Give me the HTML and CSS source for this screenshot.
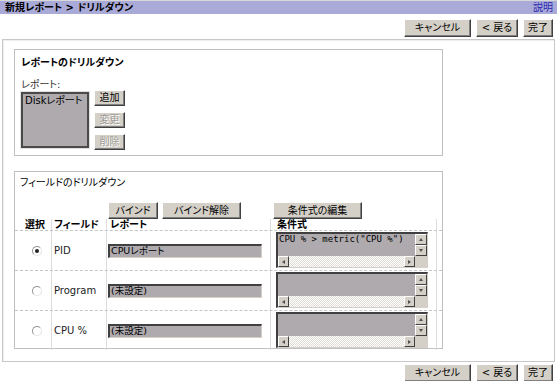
FILE: index.html
```html
<!DOCTYPE html>
<html lang="ja">
<head>
    <meta charset="UTF-8">
    <meta name="viewport" content="width=device-width, initial-scale=1.0">
    <title>新規レポート &gt; ドリルダウン</title>
    <link rel="stylesheet" href="styles.css">
</head>
<body>

<div class="titlebar">
    <span class="title">新規レポート &gt; ドリルダウン</span>
    <a class="help" href="#">説明</a>
</div>

<div class="actions">
    <button class="btn btn-cancel">キャンセル</button>
    <button class="btn btn-back">&lt; 戻る</button>
    <button class="btn btn-done">完了</button>
</div>

<div class="frame">
    <div class="section section-report">
        <div class="section-title">レポートのドリルダウン</div>
        <div class="field-label">レポート:</div>
        <div class="report-row">
            <div class="listbox">Diskレポート</div>
            <div class="side-buttons">
                <button class="btn btn-side">追加</button>
                <button class="btn btn-side" disabled>変更</button>
                <button class="btn btn-side" disabled>削除</button>
            </div>
        </div>
    </div>

    <div class="section section-fields">
        <div class="section-title thin">フィールドのドリルダウン</div>

        <div class="grid tool-row">
            <div></div>
            <div></div>
            <div class="tool-cell">
                <button class="btn btn-bind">バインド</button>
                <button class="btn btn-unbind">バインド解除</button>
            </div>
            <div class="tool-cell">
                <button class="btn btn-cond">条件式の編集</button>
            </div>
        </div>

        <div class="grid head-row">
            <div class="cell c-sel">選択</div>
            <div class="cell c-field">フィールド</div>
            <div class="cell c-report">レポート</div>
            <div class="cell c-cond">条件式</div>
        </div>

        <div class="grid data-row">
            <div class="cell c-sel"><span class="radio checked"></span></div>
            <div class="cell c-field">PID</div>
            <div class="cell c-report"><div class="textbox">CPUレポート</div></div>
            <div class="cell c-cond">
                <div class="memo">
                    <div class="memo-text">CPU % &gt; metric("CPU %")</div>
                    <div class="vscroll">
                        <span class="sbtn"><i class="arr up"></i></span>
                        <span class="sbtn"><i class="arr down"></i></span>
                    </div>
                    <div class="hscroll">
                        <span class="sbtn"><i class="arr left"></i></span>
                        <span class="track"></span>
                        <span class="sbtn"><i class="arr right"></i></span>
                    </div>
                    <div class="corner"></div>
                </div>
            </div>
        </div>

        <div class="grid data-row">
            <div class="cell c-sel"><span class="radio"></span></div>
            <div class="cell c-field">Program</div>
            <div class="cell c-report"><div class="textbox">(未設定)</div></div>
            <div class="cell c-cond">
                <div class="memo">
                    <div class="memo-text"></div>
                    <div class="vscroll">
                        <span class="sbtn"><i class="arr up"></i></span>
                        <span class="sbtn"><i class="arr down"></i></span>
                    </div>
                    <div class="hscroll">
                        <span class="sbtn"><i class="arr left"></i></span>
                        <span class="track"></span>
                        <span class="sbtn"><i class="arr right"></i></span>
                    </div>
                    <div class="corner"></div>
                </div>
            </div>
        </div>

        <div class="grid data-row last">
            <div class="cell c-sel"><span class="radio"></span></div>
            <div class="cell c-field">CPU %</div>
            <div class="cell c-report"><div class="textbox">(未設定)</div></div>
            <div class="cell c-cond">
                <div class="memo">
                    <div class="memo-text"></div>
                    <div class="vscroll">
                        <span class="sbtn"><i class="arr up"></i></span>
                        <span class="sbtn"><i class="arr down"></i></span>
                    </div>
                    <div class="hscroll">
                        <span class="sbtn"><i class="arr left"></i></span>
                        <span class="track"></span>
                        <span class="sbtn"><i class="arr right"></i></span>
                    </div>
                    <div class="corner"></div>
                </div>
            </div>
        </div>
    </div>
</div>

<div class="actions bottom">
    <button class="btn btn-cancel">キャンセル</button>
    <button class="btn btn-back">&lt; 戻る</button>
    <button class="btn btn-done">完了</button>
</div>

</body>
</html>
```

FILE: styles.css
```css
body {
    margin: 0;
    font-family: "DejaVu Sans", "Noto Sans CJK JP", sans-serif;
    font-size: 10px;
    font-feature-settings: "palt";
    color: #000;
    background-color: #fff;
}

/* タイトルバー */
.titlebar {
    height: 13px;
    border-top: 1px solid #d8d8d8;
    background-color: #aaaad8;
    display: flex;
    justify-content: space-between;
    align-items: center;
    padding: 0 4px 0 5px;
    line-height: 13px;
}
.title {
    font-weight: bold;
}
.help {
    color: #2828b0;
    text-decoration: none;
}

/* ボタン */
.btn {
    font-family: inherit;
    font-size: 10px;
    font-feature-settings: "palt";
    color: #000;
    height: 17px;
    padding: 0;
    background-color: #d4d0c8;
    border: 1px solid;
    border-color: #fff #404040 #404040 #fff;
    box-shadow: inset -1px -1px 0 #808080;
    line-height: 14px;
}
.btn:disabled {
    color: #a09c98;
    text-shadow: 1px 1px 0 #fff;
}
.btn-cancel { width: 67px; }
.btn-back { width: 42px; }
.btn-done { width: 30px; }

.actions {
    display: flex;
    justify-content: flex-end;
    gap: 5px;
    padding: 5px 4px 2px 0;
}
.actions .btn {
    height: 18px;
}
.actions.bottom {
    padding-top: 2px;
}

/* 外枠 */
.frame {
    margin: 0 2px;
    border: 1px solid #c8c8c8;
    box-shadow: inset 1px 1px 0 #eeeeee;
    padding: 9px 11px 12px 11px;
}
.section {
    width: 429px;
    box-sizing: border-box;
    border: 1px solid #c0c0c0;
}
.section-title {
    font-weight: bold;
    line-height: 12px;
}
.section-title.thin {
    font-weight: normal;
}

/* レポートのドリルダウン */
.section-report {
    height: 107px;
    padding: 7px 6px 0 6px;
}
.field-label {
    margin-top: 10px;
    line-height: 12px;
    color: #333;
}
.report-row {
    display: flex;
    gap: 5px;
    align-items: flex-start;
    margin-top: -1px;
}
.listbox {
    width: 68px;
    height: 56px;
    margin-top: 2px;
    box-sizing: border-box;
    background-color: #aeaaae;
    border: 2px solid #4a4a4a;
    box-shadow: 0 0 0 1px #e0e0e0;
    padding: 1px 2px;
    line-height: 12px;
}
.side-buttons {
    display: flex;
    flex-direction: column;
    gap: 6px;
}
.btn-side {
    width: 31px;
    height: 16px;
}

/* フィールドのドリルダウン */
.section-fields {
    height: 178px;
    margin-top: 15px;
    padding-top: 5px;
}
.section-fields .section-title {
    padding-left: 5px;
}
.grid {
    display: grid;
    grid-template-columns: 37px 55px 164px 166px;
}
.tool-row {
    margin-top: 13px;
    height: 17px;
}
.tool-cell {
    display: flex;
    gap: 4px;
    padding-left: 1px;
}
.tool-cell:last-child {
    padding-left: 2px;
}
.btn-bind { width: 50px; }
.btn-unbind { width: 79px; }
.btn-cond { width: 89px; }

.cell {
    box-sizing: border-box;
    border-right: 1px solid #dcdcdc;
}
.head-row {
    height: 11px;
    border-bottom: 1px dashed #c4c4c4;
    font-weight: bold;
    line-height: 11px;
}
.head-row .cell {
    overflow: visible;
    white-space: nowrap;
}
.c-sel { padding-left: 10px; }
.c-field { padding-left: 2px; }
.c-report { padding-left: 3px; }
.c-cond { padding-left: 6px; }

.data-row {
    height: 39px;
    border-bottom: 1px dashed #c4c4c4;
}
.data-row.last {
    border-bottom: none;
}
.data-row .cell {
    display: flex;
    align-items: center;
}
.data-row .c-field {
    color: #222;
}
.data-row .c-sel {
    padding-left: 17px;
}
.data-row .c-report {
    padding-left: 1px;
}
.data-row .c-cond {
    padding-left: 5px;
    align-items: flex-start;
    padding-top: 1px;
}

.radio {
    width: 8px;
    height: 8px;
    border-radius: 50%;
    border: 1px solid;
    border-color: #909090 #e4e4e4 #e4e4e4 #909090;
    background-color: #fff;
    display: flex;
    align-items: center;
    justify-content: center;
}
.radio.checked::after {
    content: "";
    width: 4px;
    height: 4px;
    border-radius: 50%;
    background-color: #222;
}

.textbox {
    width: 154px;
    height: 14px;
    box-sizing: border-box;
    background-color: #aeaaae;
    border-style: solid;
    border-width: 2px 1px 1px 2px;
    border-color: #404040 #d4d0c8 #d4d0c8 #404040;
    padding-left: 1px;
    line-height: 10px;
    font-size: 9.5px;
}

/* 条件式の入力欄 */
.memo {
    width: 152px;
    height: 36px;
    box-sizing: border-box;
    border-style: solid;
    border-width: 2px 1px 1px 2px;
    border-color: #404040 #d4d0c8 #d4d0c8 #404040;
    background-color: #aeaaae;
    display: grid;
    grid-template-columns: 1fr 12px;
    grid-template-rows: 1fr 11px;
}
.memo-text {
    font-family: "DejaVu Sans Mono", "Noto Sans CJK JP", monospace;
    font-size: 9px;
    line-height: 11px;
    padding-left: 1px;
    white-space: nowrap;
    overflow: hidden;
}
.vscroll {
    display: flex;
    flex-direction: column;
}
.hscroll {
    display: flex;
}
.track {
    flex: 1;
    background: repeating-conic-gradient(#ffffff 0 25%, #e0ddd8 0 50%) 0 0 / 2px 2px;
}
.corner {
    background-color: #d4d0c8;
}
.sbtn {
    width: 12px;
    height: 11px;
    box-sizing: border-box;
    background-color: #d4d0c8;
    border: 1px solid;
    border-color: #fff #404040 #404040 #fff;
    display: flex;
    align-items: center;
    justify-content: center;
}
.hscroll .sbtn {
    width: 11px;
}
.arr {
    width: 0;
    height: 0;
    border: 2px solid transparent;
}
.arr.up { border-bottom: 3px solid #505050; border-top-width: 0; }
.arr.down { border-top: 3px solid #505050; border-bottom-width: 0; }
.arr.left { border-right: 3px solid #505050; border-left-width: 0; }
.arr.right { border-left: 3px solid #505050; border-right-width: 0; }
```
